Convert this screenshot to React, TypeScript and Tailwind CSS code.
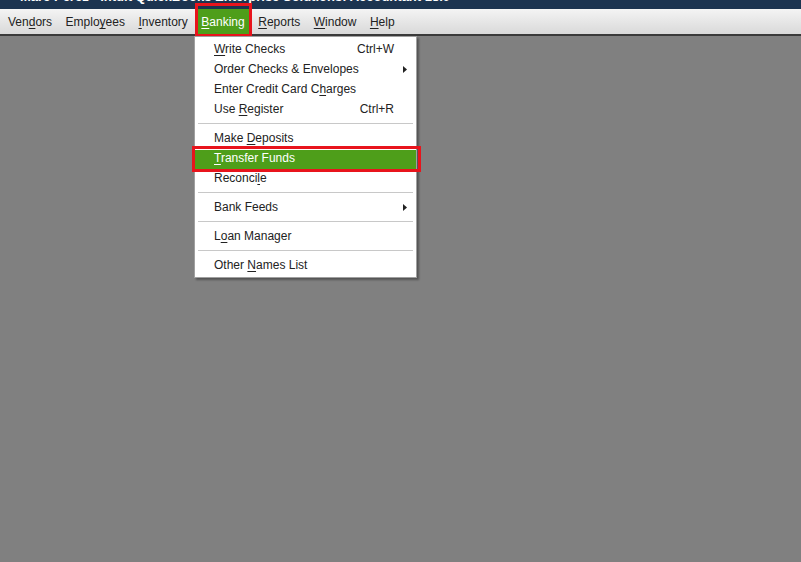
import React from 'react';

const font = { fontFamily: '"Liberation Sans", Arial, sans-serif' };

// underline one letter as a mnemonic
function Mn({ text, at }: { text: string; at: number }) {
  if (at < 0) return <>{text}</>;
  return (
    <>
      {text.slice(0, at)}
      <span className="underline underline-offset-2">{text[at]}</span>
      {text.slice(at + 1)}
    </>
  );
}

const menus: [string, number][] = [
  ['Vendors', 3],
  ['Employees', 5],
  ['Inventory', 0],
  ['Banking', 0],
  ['Reports', 0],
  ['Window', 0],
  ['Help', 0],
];

type Item =
  | { sep: true }
  | { sep?: false; label: string; at: number; shortcut?: string; sub?: boolean; active?: boolean };

const items: Item[] = [
  { label: 'Write Checks', at: 0, shortcut: 'Ctrl+W' },
  { label: 'Order Checks & Envelopes', at: -1, sub: true },
  { label: 'Enter Credit Card Charges', at: 19 },
  { label: 'Use Register', at: 4, shortcut: 'Ctrl+R' },
  { sep: true },
  { label: 'Make Deposits', at: 5 },
  { label: 'Transfer Funds', at: 0, active: true },
  { label: 'Reconcile', at: 7 },
  { sep: true },
  { label: 'Bank Feeds', at: -1, sub: true },
  { sep: true },
  { label: 'Loan Manager', at: 1 },
  { sep: true },
  { label: 'Other Names List', at: 6 },
];

export default function App() {
  return (
    <div className="w-[801px] h-[562px] bg-[#808080] overflow-hidden flex flex-col" style={font}>
      {/* Title bar, mostly cut off */}
      <div className="h-[9px] bg-[#1c3450] overflow-hidden">
        <div className="pl-[20px] -mt-[10px] text-[13px] leading-[14px] font-bold text-white whitespace-nowrap">
          Marc Perez - Intuit QuickBooks Enterprise Solutions: Accountant 18.0
        </div>
      </div>

      {/* Menu bar */}
      <div className="relative h-[27px] bg-gradient-to-b from-[#f4f4f4] to-[#d9d9d9] border-b-2 border-[#3a3a3a] flex items-stretch pl-[2px] pt-[1px] text-[12px] text-[#222]">
        {menus.map(([name, at]) => {
          const on = name === 'Banking';
          return (
            <div key={name} className="relative flex items-center px-[6px] mr-[1.5px]">
              {on && <div className="absolute -top-[1px] bottom-0 left-[3px] right-[2px] bg-[#4e9e1a]" />}
              <span className={`relative ${on ? 'text-white' : ''}`}>
                <Mn text={name} at={at} />
              </span>
              {on && <div className="absolute -top-[7px] -bottom-[3px] left-0 -right-[1px] border-[3px] border-[#e8141c]" />}
            </div>
          );
        })}

        {/* Banking dropdown */}
        <div className="absolute left-[194px] top-[27px] w-[223px] bg-white border border-[#a0a0a0] shadow-[2px_2px_2px_rgba(0,0,0,0.35)] pt-[2px] pb-[2px] text-[12px] text-[#222] z-10">
          {items.map((it, i) =>
            it.sep ? (
              <div key={i} className="h-[9px] flex items-center px-[3px]">
                <div className="h-px w-full bg-[#c8c8c8]" />
              </div>
            ) : (
              <div key={i} className="relative h-[20px] flex items-center">
                {it.active && <div className="absolute inset-x-0 top-[2px] -bottom-[1px] bg-[#4e9e1a]" />}
                <span className={`relative pl-[19px] flex-1 ${it.active ? 'text-white' : ''}`}>
                  <Mn text={it.label} at={it.at} />
                </span>
                {it.shortcut && <span className="relative pr-[22px]">{it.shortcut}</span>}
                {it.sub && (
                  <svg className="relative mr-[9px]" width="4" height="7" viewBox="0 0 4 7">
                    <path d="M0 0 L4 3.5 L0 7 Z" fill="#222" />
                  </svg>
                )}
                {it.active && <div className="absolute -top-[2px] -bottom-[4px] -left-[3px] -right-[5px] border-[3px] border-[#e8141c]" />}
              </div>
            )
          )}
        </div>
      </div>

      <div className="flex-1" />
    </div>
  );
}
